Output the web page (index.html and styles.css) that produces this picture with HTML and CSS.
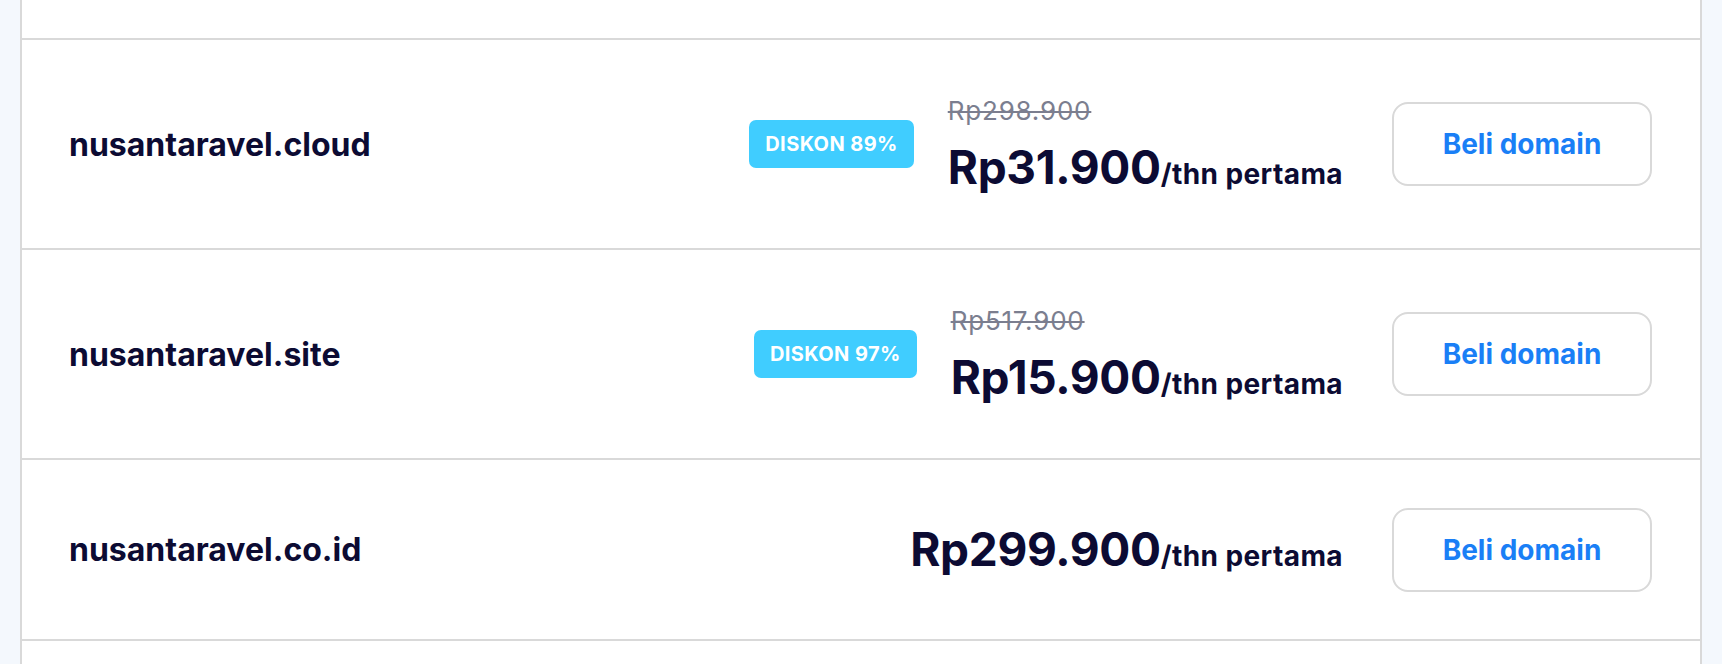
FILE: index.html
```html
<!DOCTYPE html>
<html lang="id">
<head>
<meta charset="utf-8">
<title>Domain</title>
<link rel="stylesheet" href="styles.css">
</head>
<body>
<div class="card">
  <div class="row row-cut-top"></div>

  <div class="row">
    <div class="domain">nusantaravel.cloud</div>
    <div class="offer">
      <span class="badge">DISKON 89%</span>
      <div class="pricing">
        <div class="old">Rp298.900</div>
        <div class="now"><span class="amount">Rp31.900</span><span class="per">/thn pertama</span></div>
      </div>
    </div>
    <button class="buy">Beli domain</button>
  </div>

  <div class="row">
    <div class="domain">nusantaravel.site</div>
    <div class="offer">
      <span class="badge">DISKON 97%</span>
      <div class="pricing">
        <div class="old">Rp517.900</div>
        <div class="now"><span class="amount">Rp15.900</span><span class="per">/thn pertama</span></div>
      </div>
    </div>
    <button class="buy">Beli domain</button>
  </div>

  <div class="row row-short">
    <div class="domain">nusantaravel.co.id</div>
    <div class="offer">
      <div class="pricing">
        <div class="now"><span class="amount">Rp299.900</span><span class="per">/thn pertama</span></div>
      </div>
    </div>
    <button class="buy">Beli domain</button>
  </div>

  <div class="row row-cut-bottom"></div>
</div>
</body>
</html>
```

FILE: styles.css
```css
* { box-sizing: border-box; }

html, body {
  margin: 0;
  padding: 0;
  height: 664px;
  overflow: hidden;
}

body {
  background: #f4f8fd;
  padding: 0 20px;
  font-family: "Inter", "DejaVu Sans", sans-serif;
  color: #0c0b33;
}

.card {
  background: #ffffff;
  border-left: 2px solid #d9d9d9;
  border-right: 2px solid #d9d9d9;
  height: 664px;
}

.row {
  display: flex;
  align-items: center;
  padding: 47.5px 48px 47.5px 47px;
  border-bottom: 2px solid #d9d9d9;
  min-height: 210px;
}

.row-short {
  min-height: 181px;
}

.row-cut-top {
  min-height: 0;
  height: 40px;
  padding: 0;
}

.row-cut-bottom {
  min-height: 0;
  height: 40px;
  padding: 0;
  border-bottom: none;
}

.domain {
  font-size: 32px;
  font-weight: 700;
  letter-spacing: 0;
}

.offer {
  margin-left: auto;
  display: flex;
  align-items: center;
  gap: 34px;
}

.badge {
  display: inline-flex;
  align-items: center;
  height: 48px;
  padding: 0 16px;
  border-radius: 7px;
  background: #40cdff;
  color: #ffffff;
  font-size: 20px;
  font-weight: 700;
  letter-spacing: 0.4px;
}

.pricing {
  display: flex;
  flex-direction: column;
  align-items: flex-start;
}

.old {
  font-size: 26px;
  line-height: 46px;
  letter-spacing: 0.8px;
  color: #7b7e8f;
  text-decoration: line-through;
  text-decoration-thickness: 2px;
}

.now {
  display: flex;
  align-items: baseline;
  white-space: nowrap;
}

.amount {
  font-size: 46px;
  line-height: 67px;
  font-weight: 700;
  letter-spacing: -0.3px;
}

.per {
  font-size: 28px;
  line-height: 1;
  font-weight: 700;
  letter-spacing: 0.4px;
}

.buy {
  margin-left: 49px;
  width: 260px;
  height: 84px;
  border: 2px solid #d9d9d9;
  border-radius: 16px;
  background: #ffffff;
  color: #1a7ff6;
  font-family: "Inter", "DejaVu Sans", sans-serif;
  font-size: 28px;
  font-weight: 700;
  cursor: pointer;
}
```
